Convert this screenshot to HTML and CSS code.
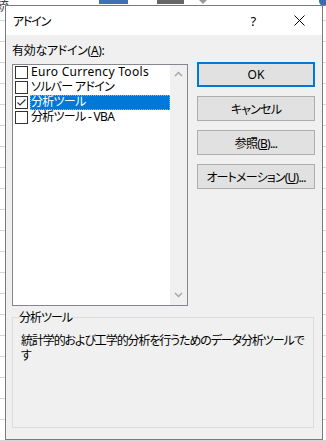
FILE: index.html
```html
<!DOCTYPE html>
<html lang="ja">
<head>
<meta charset="UTF-8">
<title>アドイン</title>
<link rel="stylesheet" href="styles.css">
</head>
<body>
<div class="sheet">
    <span class="sheet-char">統</span>
    <span class="sheet-tab blue"></span>
    <span class="sheet-tab dark"></span>
    <span class="sheet-arrow"></span>
    <span class="sheet-icon"></span>

    <div class="dialog">
        <div class="titlebar">
            <span class="title">アドイン</span>
            <span class="tbtn">?</span>
            <span class="tbtn">
                <svg width="11" height="11" viewBox="0 0 11 11"><path d="M0.5 0.5L10.5 10.5M10.5 0.5L0.5 10.5" stroke="#000" stroke-width="1" fill="none"/></svg>
            </span>
        </div>

        <div class="content">
            <div class="main">
                <div class="left">
                    <div class="label">有効なアドイン(<u>A</u>):</div>
                    <div class="listbox">
                        <ul class="items">
                            <li class="item"><span class="check"></span><span class="name latin">Euro Currency Tools</span></li>
                            <li class="item"><span class="check"></span><span class="name">ソルバー アドイン</span></li>
                            <li class="item selected"><span class="check"><svg width="11" height="11" viewBox="0 0 11 11"><path d="M1.5 5.5L4 8L9.5 2.5" stroke="#333" stroke-width="1.2" fill="none"/></svg></span><span class="name">分析ツール</span></li>
                            <li class="item"><span class="check"></span><span class="name">分析ツール - VBA</span></li>
                        </ul>
                        <div class="scrollbar">
                            <svg width="9" height="6" viewBox="0 0 9 6"><path d="M1 5L4.5 1.5L8 5" stroke="#a6a6a6" stroke-width="1.5" fill="none"/></svg>
                            <svg width="9" height="6" viewBox="0 0 9 6"><path d="M1 1L4.5 4.5L8 1" stroke="#a6a6a6" stroke-width="1.5" fill="none"/></svg>
                        </div>
                    </div>
                </div>
                <div class="buttons">
                    <button class="btn default">OK</button>
                    <button class="btn">キャンセル</button>
                    <button class="btn">参照(<u>B</u>)...</button>
                    <button class="btn">オートメーション(<u>U</u>)...</button>
                </div>
            </div>

            <fieldset class="group">
                <legend>分析ツール</legend>
                <p class="desc">統計学的および工学的分析を行うためのデータ分析ツールで<br>す</p>
            </fieldset>
        </div>
    </div>
</div>
</body>
</html>
```

FILE: styles.css
```css
body {
    margin: 0;
    font-family: "Noto Sans", "Noto Sans CJK JP", sans-serif;
    font-feature-settings: "palt";
    font-size: 12px;
    letter-spacing: -0.5px;
    color: #000;
}

.sheet {
    position: relative;
    width: 326px;
    height: 441px;
    overflow: hidden;
    background: repeating-linear-gradient(to bottom, #fff 0, #fff 20px, #d6d6d6 20px, #d6d6d6 21px);
}

.sheet-char {
    position: absolute;
    top: -5px;
    left: -4px;
    font-size: 13px;
    color: #444;
}

.sheet-tab {
    position: absolute;
    top: 0;
    height: 4px;
}

.sheet-tab.blue {
    left: 99px;
    width: 29px;
    background: #3f6fb5;
}

.sheet-tab.dark {
    left: 157px;
    width: 27px;
    background: #666;
}

.sheet-arrow {
    position: absolute;
    top: 0;
    left: 199px;
    border-left: 4px solid transparent;
    border-right: 4px solid transparent;
    border-top: 4px solid #999;
}

.sheet-icon {
    position: absolute;
    top: -4px;
    left: 319px;
    width: 10px;
    height: 10px;
    border-radius: 50%;
    background: #3a6bb0;
}

.dialog {
    position: absolute;
    top: 5px;
    left: 5px;
    width: 318px;
    height: 435px;
    box-sizing: border-box;
    border: 1px solid #7a7a7a;
    background: #f0f0f0;
}

.titlebar {
    height: 29px;
    background: #fff;
    display: flex;
    align-items: center;
}

.title {
    flex: 1;
    padding-left: 7px;
    letter-spacing: -1.2px;
}

.tbtn {
    width: 46px;
    height: 29px;
    display: flex;
    align-items: center;
    justify-content: center;
    font-size: 13px;
}

.content {
    padding: 0 7px 0 6px;
}

.main {
    display: flex;
    gap: 9px;
}

.left {
    width: 176px;
    padding-top: 8px;
}

.label {
    line-height: 15px;
    margin-bottom: 6px;
    letter-spacing: -0.3px;
}

.listbox {
    height: 242px;
    box-sizing: border-box;
    border: 1px solid #828790;
    display: flex;
}

.items {
    flex: 1;
    margin: 0;
    padding: 0 0 0 2px;
    list-style: none;
    background: #fff;
}

.item {
    height: 15px;
    display: flex;
    align-items: center;
}

.check {
    width: 13px;
    height: 13px;
    box-sizing: border-box;
    border: 1px solid #333;
    background: #fff;
    margin-right: 2px;
    display: flex;
    align-items: center;
    justify-content: center;
}

.name {
    flex: 1;
    height: 15px;
    line-height: 14px;
    padding-left: 1px;
    white-space: nowrap;
    letter-spacing: -0.7px;
}

.name.latin {
    letter-spacing: 0.3px;
}

.selected .name {
    background: #0078d7;
    color: #fff;
    outline: 1px dotted #f0a030;
    outline-offset: -1px;
}

.scrollbar {
    width: 17px;
    background: #f0f0f0;
    display: flex;
    flex-direction: column;
    justify-content: space-between;
    align-items: center;
    padding: 6px 0 7px;
}

.buttons {
    width: 118px;
    padding-top: 27px;
    display: flex;
    flex-direction: column;
    gap: 9px;
}

.btn {
    height: 25px;
    padding: 0;
    border: 1px solid #adadad;
    background: #e1e1e1;
    font: inherit;
    letter-spacing: -0.8px;
    color: #000;
}

.btn.default {
    border: 2px solid #0078d7;
    letter-spacing: 0;
}

.group {
    margin: 4px 1px 0 0;
    padding: 0 8px;
    border: 1px solid #dcdcdc;
}

.group legend {
    padding: 0;
    margin-left: -2px;
    line-height: 15px;
    letter-spacing: -1px;
}

.desc {
    margin: 0;
    height: 102px;
    box-sizing: border-box;
    padding-top: 8px;
    line-height: 15px;
    white-space: nowrap;
    letter-spacing: -1.1px;
}
```
